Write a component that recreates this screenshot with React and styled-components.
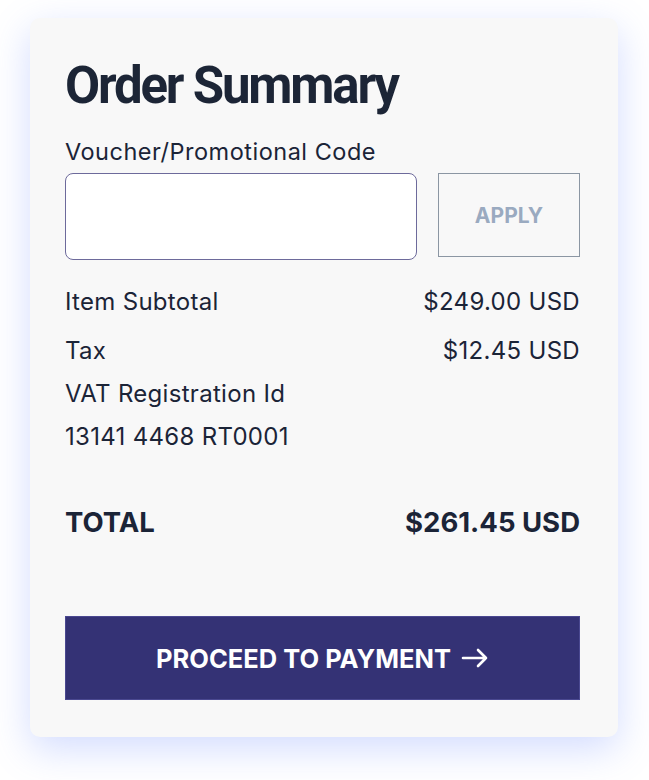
import React from "react";
import styled, { createGlobalStyle } from "styled-components";

const GlobalStyle = createGlobalStyle`
  body {
    margin: 0;
    background: #ffffff;
    font-family: Inter, "Noto Sans", sans-serif;
    color: #1b2437;
  }
`;

const Page = styled.div`
  padding: 18px 31px 43px 30px;
`;

const Card = styled.div`
  background: #f8f8f8;
  border-radius: 10px;
  padding: 38px 38px 37px 35px;
  box-shadow: 0 12px 38px rgba(110, 140, 255, 0.3);
  display: flex;
  flex-direction: column;
`;

const Title = styled.h1`
  margin: 0;
  font-family: Roboto, sans-serif;
  font-weight: 700;
  font-size: 51px;
  line-height: 60px;
  letter-spacing: -2.2px;
  color: #1c2536;
`;

const Label = styled.label`
  margin-top: 21px;
  font-size: 23.5px;
  line-height: 30px;
  letter-spacing: 0.5px;
`;

const VoucherRow = styled.div`
  margin-top: 6px;
  display: flex;
  align-items: flex-start;
  gap: 21px;
`;

const Input = styled.input`
  flex: 1;
  min-width: 0;
  height: 87px;
  box-sizing: border-box;
  border: 1px solid #6d6a9b;
  border-radius: 8px;
  background: #ffffff;
  font-size: 22px;
  padding: 0 16px;
  outline: none;
`;

const ApplyButton = styled.button`
  width: 142px;
  height: 84px;
  box-sizing: border-box;
  border: 1px solid #8b96a3;
  background: transparent;
  color: #9aaac0;
  font-family: Inter, sans-serif;
  font-weight: 700;
  font-size: 21px;
`;

const Lines = styled.div`
  margin-top: 20px;
  display: flex;
  flex-direction: column;
`;

const Line = styled.div`
  display: flex;
  justify-content: space-between;
  font-size: 24px;
  letter-spacing: 0.3px;
  line-height: 43px;
  margin-bottom: ${(p) => (p.$gap ? p.$gap : 0)}px;
`;

const TotalRow = styled.div`
  margin-top: 47px;
  display: flex;
  justify-content: space-between;
  font-size: 27.5px;
  font-weight: 700;
  line-height: 34px;
`;

const PayButton = styled.button`
  margin-top: 77px;
  height: 84px;
  border: 1px solid #4a4890;
  background: #343275;
  color: #ffffff;
  font-family: Inter, sans-serif;
  font-weight: 700;
  font-size: 25.5px;
  display: flex;
  align-items: center;
  justify-content: center;
  gap: 10px;
`;

export default function App() {
  return (
    <>
      <GlobalStyle />
      <Page>
        <Card>
          <Title>Order Summary</Title>
          <Label>Voucher/Promotional Code</Label>
          <VoucherRow>
            <Input />
            <ApplyButton>APPLY</ApplyButton>
          </VoucherRow>
          <Lines>
            <Line $gap={6}>
              <span>Item Subtotal</span>
              <span>$249.00 USD</span>
            </Line>
            <Line>
              <span>Tax</span>
              <span>$12.45 USD</span>
            </Line>
            <Line>
              <span>VAT Registration Id</span>
            </Line>
            <Line>
              <span>13141 4468 RT0001</span>
            </Line>
          </Lines>
          <TotalRow>
            <span>TOTAL</span>
            <span>$261.45 USD</span>
          </TotalRow>
          <PayButton>
            PROCEED TO PAYMENT
            <svg width="28" height="22" viewBox="0 0 28 22" fill="none" stroke="#fff" strokeWidth="2.6" strokeLinecap="round" strokeLinejoin="round">
              <path d="M2 11h23M17 3l8 8-8 8" />
            </svg>
          </PayButton>
        </Card>
      </Page>
    </>
  );
}
